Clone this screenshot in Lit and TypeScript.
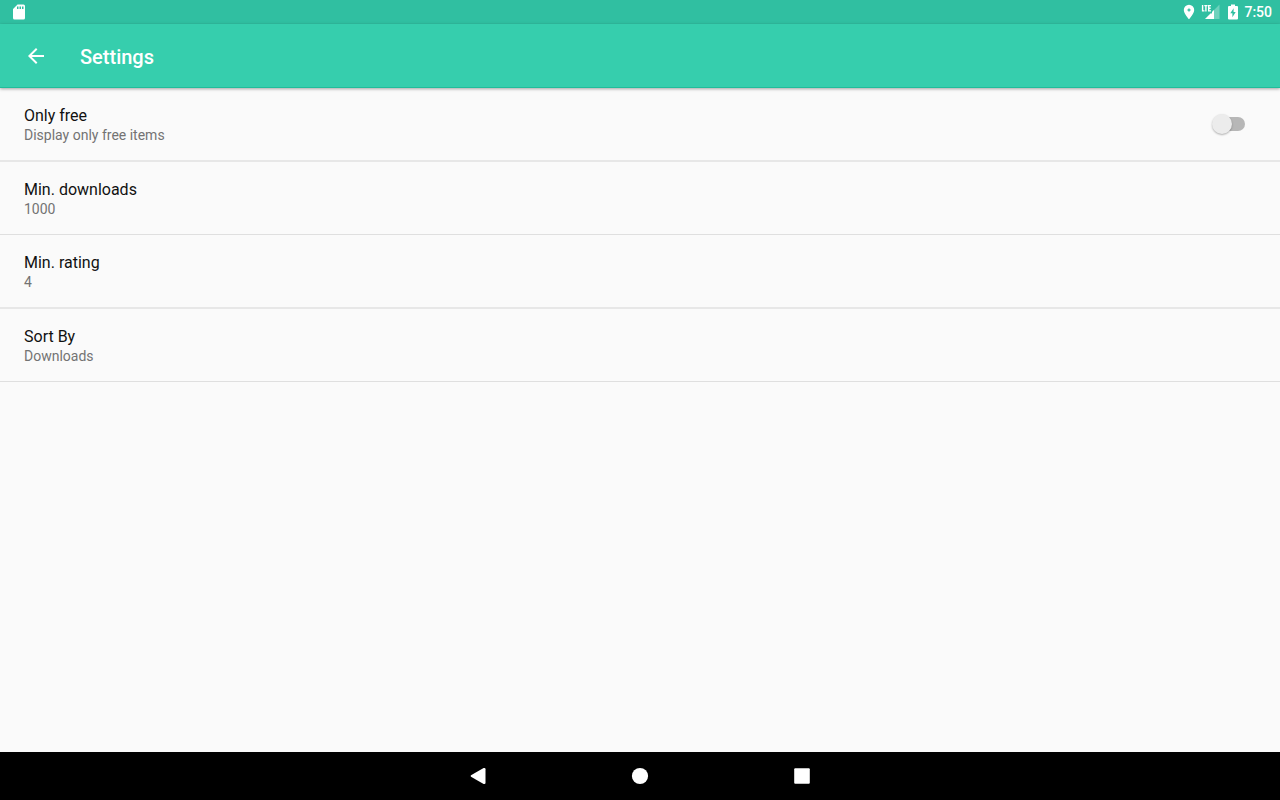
import { LitElement, html, css, nothing } from "lit";
import { customElement, state } from "lit/decorators.js";

interface Preference {
  title: string;
  summary: string;
}

const preferences: Preference[] = [
  { title: "Min. downloads", summary: "1000" },
  { title: "Min. rating", summary: "4" },
  { title: "Sort By", summary: "Downloads" },
];

@customElement("status-bar")
class StatusBar extends LitElement {
  static styles = css`
    :host {
      display: flex;
      align-items: center;
      justify-content: space-between;
      height: 24px;
      padding: 0 8px 0 12px;
      background: #30bfa1;
      color: #fff;
      font-size: 14px;
      font-weight: 500;
      line-height: 26px;
    }
    svg {
      display: block;
      fill: currentColor;
    }
    .system {
      display: flex;
      align-items: center;
    }
    .signal {
      margin-left: 6px;
    }
    .battery {
      margin: 0 6px 0 8px;
    }
  `;

  render() {
    return html`
      <svg width="14" height="16" viewBox="0 0 14 16" aria-label="SD card">
        <path
          fill-rule="evenodd"
          d="M5.5 .5H11.500Q13 .5 13 2V14Q13 15.500 11.500 15.500H2.500Q1 15.500 1 14V5ZM5 2.600V5H6.500V2.600ZM7.500 2.600V5H9V2.600ZM10 2.600V5H11.500V2.600Z"
        />
      </svg>
      <div class="system">
        <svg width="12" height="16" viewBox="0 0 12 16" aria-label="Location">
          <path
            fill-rule="evenodd"
            d="M6 .7A5.200 5.200 0 0 0 .8 5.900C.8 9.700 6 15.200 6 15.200S11.200 9.700 11.200 5.900A5.200 5.200 0 0 0 6 .7ZM6 3.800L6.700 5.300 8.200 6 6.700 6.700 6 8.200 5.300 6.700 3.800 6 5.300 5.300Z"
          />
        </svg>
        <svg class="signal" width="19" height="16" viewBox="0 0 19 16" aria-label="LTE signal">
          <path opacity=".3" d="M18.500 .5V15H4L9.500 9.500H11V8Z" />
          <path d="M4 15L9.500 9.500H11V8L13 6V15Z" />
          <path
            fill="none"
            stroke="currentColor"
            stroke-width="1.400"
            d="M1.600 1V6.900H3.500M3.300 1.600H6.500M4.900 1.600V7.500M10 1.600H7.700V6.900H10M7.700 4.200H9.700"
          />
        </svg>
        <svg class="battery" width="10" height="16" viewBox="0 0 10 16" aria-label="Charging">
          <path
            fill-rule="evenodd"
            d="M3 .5H7V2H9Q10 2 10 3V14.500Q10 15.500 9 15.500H1Q0 15.500 0 14.500V3Q0 2 1 2H3ZM5.600 4.200L2.300 9.300H4.400V13.200L7.700 8H5.600Z"
          />
        </svg>
        <span>7:50</span>
      </div>
    `;
  }
}

@customElement("navigation-bar")
class NavigationBar extends LitElement {
  static styles = css`
    :host {
      display: flex;
      align-items: center;
      justify-content: center;
      gap: 114px;
      height: 48px;
      background: #000;
    }
    button {
      display: grid;
      place-items: center;
      width: 48px;
      height: 48px;
      padding: 0;
      border: 0;
      background: none;
      color: #fff;
    }
    svg {
      fill: currentColor;
    }
  `;

  render() {
    return html`
      <button aria-label="Back">
        <svg width="18" height="18" viewBox="0 0 18 18">
          <path d="M2 8.200L14.600 1.100Q16.500 .5 16.500 2.200V15.800Q16.500 17.500 14.600 16.900L2 9.800Q1.200 9 2 8.200Z" />
        </svg>
      </button>
      <button aria-label="Home">
        <svg width="18" height="18" viewBox="0 0 18 18"><circle cx="9" cy="9" r="8.100" /></svg>
      </button>
      <button aria-label="Overview">
        <svg width="18" height="18" viewBox="0 0 18 18">
          <rect x="1.200" y="1.200" width="15.600" height="15.600" rx="1" />
        </svg>
      </button>
    `;
  }
}

@customElement("app-root")
class AppRoot extends LitElement {
  static styles = css`
    :host {
      display: flex;
      flex-direction: column;
      min-height: 100vh;
      background: #fafafa;
      color: #111;
      font-family: Roboto, sans-serif;
    }
    .toolbar {
      display: flex;
      align-items: center;
      gap: 32px;
      height: 64px;
      padding-left: 24px;
      box-sizing: border-box;
      background: #36cead;
      border-bottom: 1px solid #20bd9b;
      box-shadow: 0 1px 3px rgba(0, 0, 0, 0.35);
      color: #fff;
    }
    .back {
      width: 24px;
      height: 24px;
      padding: 0;
      border: 0;
      background: none;
      color: inherit;
    }
    .back svg {
      display: block;
      fill: currentColor;
    }
    h1 {
      margin: 0;
      padding-top: 2px;
      font-size: 20px;
      font-weight: 500;
      line-height: 24px;
    }
    main {
      flex: 1;
    }
    ul {
      margin: 0;
      padding: 0;
      list-style: none;
    }
    li {
      border-bottom: 2px solid #e7e7e7;
    }
    li:nth-child(even) {
      border-bottom: 1px solid #dfdfdf;
    }
    .row {
      display: flex;
      align-items: center;
      justify-content: space-between;
      width: 100%;
      min-height: 72px;
      box-sizing: border-box;
      padding: 2px 32px 0 24px;
      border: 0;
      background: none;
      color: inherit;
      font: inherit;
      text-align: left;
    }
    .text,
    .title,
    .summary {
      display: block;
    }
    .title {
      font-size: 16px;
      line-height: 20px;
    }
    .summary {
      color: #737373;
      font-size: 14px;
      line-height: 18px;
    }
    .switch {
      appearance: none;
      display: flex;
      align-items: center;
      width: 28px;
      height: 14px;
      margin: 0 3px 2px 0;
      border-radius: 7px;
      background: #b7b7b7;
    }
    .switch::before {
      content: "";
      width: 20px;
      height: 20px;
      margin-left: -5px;
      flex: none;
      border-radius: 50%;
      background: #ececec;
      box-shadow: 0 1px 2px rgba(0, 0, 0, 0.3);
    }
    .switch:checked::before {
      margin-left: 13px;
      background: #36cead;
    }
  `;

  @state() private onlyFree = false;

  private text(title: string, summary: string) {
    return html`
      <span class="text">
        <span class="title">${title}</span>
        ${summary ? html`<span class="summary">${summary}</span>` : nothing}
      </span>
    `;
  }

  render() {
    return html`
      <status-bar></status-bar>
      <header class="toolbar">
        <button class="back" aria-label="Navigate up">
          <svg width="24" height="24" viewBox="0 0 24 24">
            <path d="M20 11H7.830l5.590-5.590L12 4l-8 8 8 8 1.410-1.410L7.830 13H20v-2z" />
          </svg>
        </button>
        <h1>Settings</h1>
      </header>
      <main>
        <ul>
          <li>
            <label class="row">
              ${this.text("Only free", "Display only free items")}
              <input
                class="switch"
                type="checkbox"
                role="switch"
                .checked=${this.onlyFree}
                @change=${(e: Event) => (this.onlyFree = (e.target as HTMLInputElement).checked)}
              />
            </label>
          </li>
          ${preferences.map(
            (p) => html`<li><button class="row">${this.text(p.title, p.summary)}</button></li>`
          )}
        </ul>
      </main>
      <navigation-bar></navigation-bar>
    `;
  }
}
